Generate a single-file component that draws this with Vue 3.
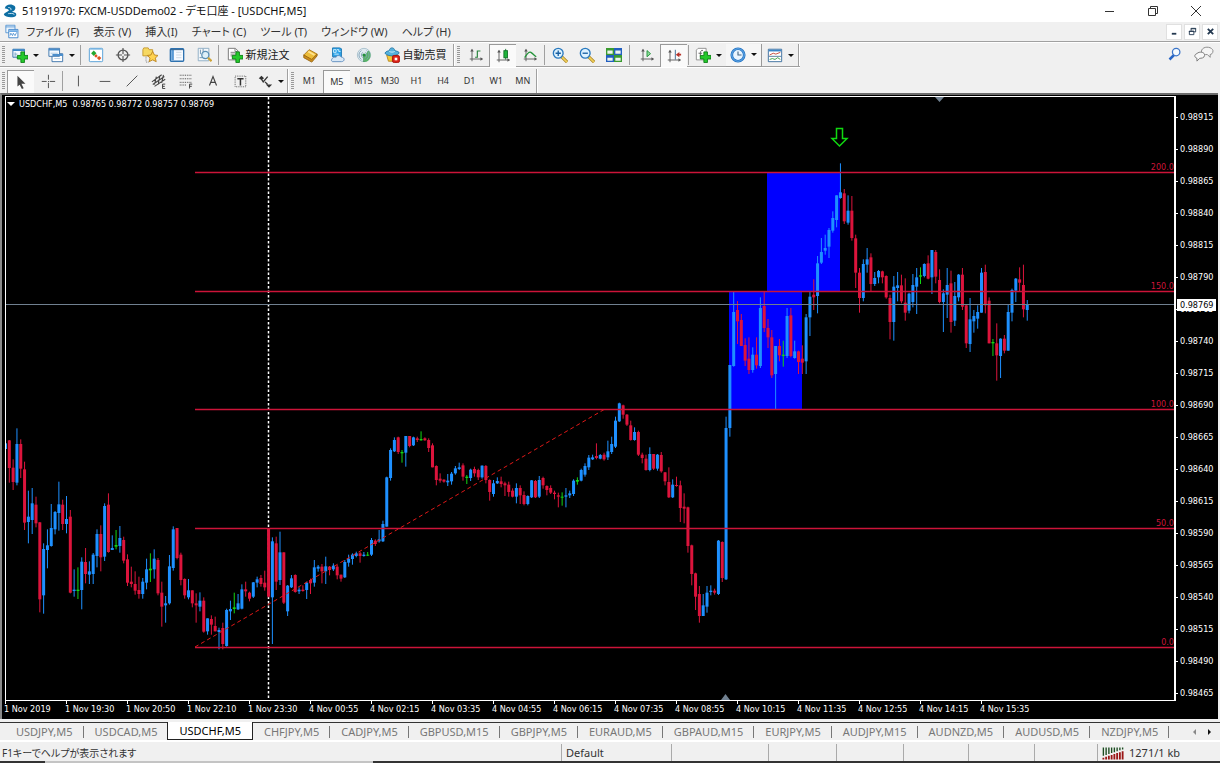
<script setup>
const arrowAxes = '<path d="M4.500 3v13M2 13.500h14" stroke="#555" fill="none"/><path d="M2.500 5l2-3 2 3zM14 11.500l3 2-3 2z" fill="#555"/>'
const plus = '<path d="M10 6.500h4v4h4v4h-4v4h-4v-4H6v-4h4z" fill="#24c92b" stroke="#0b7d16" transform="translate(0 -1)"/>'
const icons = {
  app: '<path d="M2 5c1-4 5-5 9-4 4 1 4 5 1 7l-2 1c3 0 6 1 5 4-1 2-4 2-6 2-4 0-7-1-8-3 0-2 4-3 6-5-2-2-4-2-5-2z" fill="#0d6ea3"/><path d="M6 4c2 0 4 1 3 3M6 11c2 0 5-1 7 1" stroke="#e4f4fb" fill="none"/>',
  mdi: '<path d="M1 1.500h11v9H1z" fill="#eef6fd" stroke="#4c8fd0"/><path d="M1 3.500h11" stroke="#4c8fd0"/><path d="M4.500 6.500h11v10h-11z" fill="#fff" stroke="#2f7bc6"/><path d="M5 8.500h10" stroke="#5fa3e2" stroke-width="2"/><path d="M6 14l1-3 2 3 1-3 2 3 2-4" stroke="#4c8fd0" fill="none"/>',
  newChart: '<path d="M1 2.500h13v9H1z" fill="#f4faff" stroke="#2c6ca8"/><path d="M1 3.500h13" stroke="#3d87c7" stroke-width="2"/><path d="M3.500 6v5M3 8h3M10 7h2" stroke="#79a5c7"/>' + plus,
  profiles: '<path d="M4.500 7.500h12v9h-12z" fill="#fff" stroke="#356fa8"/><path d="M1 1.500h12v9H1z" fill="#f3f9ff" stroke="#356fa8"/><path d="M1 3h12M5 9h12" stroke="#4a8dcb" stroke-width="2"/><path d="M3 7h8M7 13h7" stroke="#a8c6de"/>',
  market: '<rect x="1.500" y="1.500" width="15" height="15" rx="1" fill="#fff" stroke="#4c9bd5"/><path d="M2 2.500h14" stroke="#76b5e2"/><path d="M6.500 4l3 3-3 3-3-3z" fill="#24a82e"/><path d="M9 8l2 2-2 2-2-2zM12.500 10l2.500 2.500-2.500 2.500-2.500-2.500z" fill="#df5420"/>',
  cross: '<circle cx="9" cy="9" r="5.500" fill="none" stroke="#555" stroke-width="1.500"/><path d="M9 1v7M9 10v7M1 9h7M10 9h7" stroke="#555" stroke-width="1.300"/>',
  navigator: '<path d="M1 3l1-2h5l1 2h4v7H1z" fill="#f6d862" stroke="#c2952c"/><path d="M4.500 11v6h4" stroke="#777" stroke-dasharray="1 1" fill="none"/><path d="M12 5l2 4 4 .500-3 3 1 4-4-2-4 2 1-4-3-3 4-.500z" fill="#ffd350" stroke="#b9811b"/>',
  terminal: '<rect x="1.500" y="2" width="15" height="14" rx="1" fill="#f6faff" stroke="#2e72b0" stroke-width="1.500"/><path d="M4 3v12" stroke="#5a9ad6" stroke-width="3"/><path d="M2 3h14" stroke="#24557f"/><path d="M8 6h6M8 9h6M8 12h6" stroke="#cad5df"/>',
  tester: '<path d="M2.500 1.500h12v14h-12z" fill="#f4f8fb" stroke="#88a9c2"/><path d="M5 3v5M8 2v7M4 12h6" stroke="#668dab"/><circle cx="10.500" cy="9" r="4" fill="#d8edf9" fill-opacity=".8" stroke="#588eb4" stroke-width="1.400"/><path d="M13.500 12l4 4" stroke="#cda338" stroke-width="2.500"/>',
  order: '<path d="M1.500 1.500h8l3 3v10h-11z" fill="#fff" stroke="#6e6e6e"/><path d="M9 2v3h3M4 6h5M4 8h6M4 10h3" stroke="#777" fill="none"/>' + plus,
  editor: '<path d="M2 9l6-6 9 5-6 7z" fill="#edbd3a" stroke="#a97416"/><path d="M2 9v3l9 5 6-7V8l-6 6z" fill="#cd8d1c" stroke="#976510"/><path d="M7 5l7 4" stroke="#ffe390" stroke-width="2"/>',
  vps: '<path d="M4 1h8l2 1v9H4z" fill="#2da2e7" stroke="#1773b0"/><path d="M5 3h3v3H5zM9 3h2v2h2M6 8h5" stroke="#d8f3ff" fill="none"/><path d="M4 16.500h10c4 0 4-5 0-5-2-3-6-2-6 0-4-1-7 4-4 5z" fill="#d9e8f6" stroke="#5a8abc"/>',
  signal: '<circle cx="9" cy="9" r="7.500" fill="#dfeaf0" stroke="#a6bfcb"/><path d="M10 9v8c7-1 8-10 4-13z" fill="#57b565"/><path d="M6 4a6 6 0 0 0 0 10M12 4a6 6 0 0 1 0 10M7.500 6a4 4 0 0 0 0 6M10.500 6a4 4 0 0 1 0 6" stroke="#7f9fb5" fill="none"/><circle cx="9" cy="9" r="1.800" fill="#228b40"/><path d="M9 9v8" stroke="#298e42" stroke-width="1.500"/>',
  auto: '<path d="M3 9l2 7h8l2-7z" fill="#f5c936" stroke="#b5851e"/><path d="M1 7c2-3 3-2 5-3 0-4 6-4 6 0 3 1 5 1 5 3-4 4-12 4-16 0z" fill="#55b1dc" stroke="#2679a7"/><path d="M6 5c2 1 4 1 6 0" stroke="#d4f1ff" fill="none"/><rect x="9.500" y="9.500" width="8" height="8" rx="2" fill="#dd2116" stroke="#a50f09"/><path d="M12 12h3v3h-3z" fill="#fff"/>',
  bars: arrowAxes + '<path d="M10.500 4v8M8 11.500h2M11 4.500h3" stroke="#26823a" stroke-width="1.300"/>',
  candles: arrowAxes + '<path d="M12 1v12" stroke="#16702b"/><rect x="10" y="3" width="4" height="8" fill="#1eb53a" stroke="#11702a"/>',
  line: arrowAxes + '<path d="M3 12c3-5 5-7 7-6 2 1 3 3 6 5" fill="none" stroke="#24943a" stroke-width="1.500"/>',
  zoomIn: '<path d="M11 11l6 6" stroke="#a47c1c" stroke-width="3.500"/><path d="M11 11l6 6" stroke="#f0d05a" stroke-width="2"/><circle cx="7" cy="7" r="5.500" fill="#ddf2ff" stroke="#2979be" stroke-width="1.500"/><path d="M4 7h6M7 4v6" stroke="#1960a2" stroke-width="1.500"/>',
  zoomOut: '<path d="M11 11l6 6" stroke="#a47c1c" stroke-width="3.500"/><path d="M11 11l6 6" stroke="#f0d05a" stroke-width="2"/><circle cx="7" cy="7" r="5.500" fill="#ddf2ff" stroke="#2979be" stroke-width="1.500"/><path d="M4 7h6" stroke="#1960a2" stroke-width="1.500"/>',
  tile: '<path d="M0 1h9v8H0zM9 9h9v8H9z" fill="#3a9b2f"/><path d="M9 1h9v8H9zM0 9h9v8H0z" fill="#225fc0"/><path d="M1.500 4h6v3.500h-6zM10.500 4h6v3.500h-6zM1.500 12h6v3.500h-6zM10.500 12h6v3.500h-6z" fill="#edf5ef"/>',
  scroll: arrowAxes + '<path d="M9 4l4 3.500L9 11z" fill="#8cdc97" stroke="#1c8f36"/>',
  shift: arrowAxes + '<path d="M10.500 2v11" stroke="#34638e"/><path d="M11 7.500l4-3v2h2v2h-2v2z" fill="#b8332b"/>',
  indicator: '<path d="M1.500 3.500l2-2h9v13h-11z" fill="#fff" stroke="#888"/><path d="M9 4c-3-1-3 2-3 7M4 7h4" stroke="#555" fill="none"/>' + plus,
  clock: '<circle cx="9" cy="9" r="7" fill="#e9f5ff" stroke="#1f70c1" stroke-width="3"/><circle cx="9" cy="9" r="7" fill="none" stroke="#78b9f1"/><path d="M9 5v4h4" stroke="#496985" stroke-width="1.300" fill="none"/>',
  template: '<path d="M1.500 2.500h15v14h-15z" fill="#fff" stroke="#33689a"/><path d="M2 4h14" stroke="#3b86c7" stroke-width="2"/><path d="M2 10.500h14" stroke="#4b7698"/><path d="M3 9l4-2 3 1 5-2" stroke="#c34231" fill="none"/><path d="M3 14l3-1 3 1 3-2 3 2" stroke="#329a3b" fill="none"/>',
  cursor: '<path d="M5 2l9 9H9.500l2.500 5-2 1-2.500-5L5 14z" fill="#444"/>',
  crosshair: '<path d="M9.500 2v5.500M9.500 11v6M2 9.500h5.500M11 9.500h6" stroke="#444"/><path d="M9 9h1v1H9z" fill="#444"/>',
  vline: '<path d="M9.500 3v12" stroke="#444"/>',
  hline: '<path d="M3 9.500h12" stroke="#444"/>',
  trend: '<path d="M3 15L15 3" stroke="#444"/>',
  channel: '<path d="M1 10L12 2M2 13L15 4M4 15L16 7M6 4L4 13M10 3L8 13M14 2l-2 9" stroke="#444" stroke-width="1.200"/><path d="M16 12.500h-3v5h3M13 15h2.500" stroke="#333" fill="none"/>',
  fibo: '<path d="M2 2.500h14M2 6.500h14M2 10.500h14M2 13.500h8" stroke="#333" stroke-dasharray="1 1"/><path d="M16 12.500h-3v5M13 15h2.500" stroke="#333" fill="none"/>',
  letter: '<path d="M5 14L9 4l4 10M6.500 10.500h5" stroke="#444" stroke-width="1.300" fill="none"/>',
  label: '<rect x="3.500" y="3.500" width="12" height="12" fill="none" stroke="#555" stroke-dasharray="1 1"/><path d="M6 6.500h7M9.500 6v8" stroke="#333" stroke-width="1.700"/>',
  arrows: '<path d="M2 6l3-3 3 3-3 2zM10 13h7l-3.500 3.500z" fill="#333"/><path d="M5 7l2 3 5-6M9 10l3 3" stroke="#333" fill="none" stroke-width="1.500"/>',
  find: '<path d="M3 15l6-6" stroke="#2866c6" stroke-width="3"/><circle cx="11" cy="6" r="4.500" fill="#f5fbff" stroke="#3a74c8" stroke-width="1.500"/>',
  chat: '<path d="M9 3c3-3 10-2 11 2 0 3-2 4-3 4v3l-3-3c-5 1-8-3-5-6z" fill="#f5f5f5" stroke="#888"/><path d="M3 8c3-3 9-1 8 2 0 3-4 3-5 3l-3 3v-3C0 12 0 9 3 8z" fill="#f7f7f7" stroke="#777"/>',
}

const menus = ['ファイル (F)', '表示 (V)', '挿入(I)', 'チャート (C)', 'ツール (T)', 'ウィンドウ (W)', 'ヘルプ (H)']

const mainTools = [
  { kind: 'grip' },
  { icon: 'newChart', label: '新規チャート', drop: true },
  { icon: 'profiles', label: '表示プロファイル', drop: true },
  { kind: 'sep' },
  { icon: 'market', label: '気配値' },
  { icon: 'cross', label: 'データウィンドウ' },
  { icon: 'navigator', label: 'ナビゲーター' },
  { icon: 'terminal', label: 'ターミナル' },
  { icon: 'tester', label: 'ストラテジーテスター' },
  { kind: 'sep' },
  { icon: 'order', label: '新規注文', text: '新規注文' },
  { icon: 'editor', label: 'メタエディター' },
  { icon: 'vps', label: '仮想ホスティング' },
  { icon: 'signal', label: 'シグナル' },
  { icon: 'auto', label: '自動売買', text: '自動売買' },
  { kind: 'end' },
  { kind: 'grip' },
  { icon: 'bars', label: 'バーチャート' },
  { icon: 'candles', label: 'ローソク足', on: true },
  { icon: 'line', label: 'ラインチャート' },
  { kind: 'sep' },
  { icon: 'zoomIn', label: '拡大' },
  { icon: 'zoomOut', label: '縮小' },
  { icon: 'tile', label: '整列' },
  { kind: 'sep wide' },
  { icon: 'scroll', label: '自動スクロール' },
  { icon: 'shift', label: 'チャートシフト', on: true },
  { kind: 'sep' },
  { icon: 'indicator', label: 'インディケータ', drop: true },
  { icon: 'clock', label: '時間足設定', drop: true, raised: true },
  { icon: 'template', label: '定型チャート', drop: true },
  { kind: 'end' },
]
const drawTools = [
  { kind: 'grip' },
  { icon: 'cursor', label: 'カーソル', on: true },
  { icon: 'crosshair', label: 'クロスヘア' },
  { kind: 'sep' },
  { icon: 'vline', label: '垂直線' },
  { icon: 'hline', label: '水平線' },
  { icon: 'trend', label: 'トレンドライン' },
  { icon: 'channel', label: '平行チャネル' },
  { icon: 'fibo', label: 'フィボナッチ' },
  { icon: 'letter', label: 'テキスト' },
  { icon: 'label', label: 'テキストラベル' },
  { icon: 'arrows', label: '矢印', drop: true },
  { kind: 'end' },
  { kind: 'grip' },
]
const periods = ['M1', 'M5', 'M15', 'M30', 'H1', 'H4', 'D1', 'W1', 'MN']

// Candle rows: direction, then high, low, body top and body bottom in thirds of a chart unit below the block's top.
const blocks = [
  { top: 400, rows: 'b 65 190 130 147,r 120 248 121 204,r 178 270 203 246,b 85 256 132 248,r 118 234 132 206,r 185 390 208 368,b 272 430 350 366,b 264 402 310 360,r 290 382 314 370,r 366 637 367 598,b 430 641 447 586,b 388 505 436 450,b 312 440 384 438,b 333 403 336 388,b 245 392 313 339,r 299 390 314 372,b 288 400 357 372,r 330 580 350 578,b 508 590 569 573,g 502 597 569 573,b 472 628 485 570,r 444 550 486 522,b 484 552 514 524,b 459 552 464 522,b 388 502 402 468,r 376 514 402 472,b 310 483 318 470,r 280 458 314 456,b 406 450 444 450,g 390 448 435 440,b 378 458 414 438,r 410 490 420 482,r 463 558 478 548,r 500 562 545 552,r 514 584 552 572,r 530 596 570 582,b 534 596 545 582,b 476 568 508 548,g 460 546 506 511,b 448 536 476 508,r 474 586 480 580,r 545 680 578 620,b 588 668 610 616,b 465 614 499 610,b 379 512 388 504,r 384 478 384 474,r 458 556 464 540,r 535 596 537 586,b 537 598 571 592,r 571 622 571 610,r 580 668 610 616,b 577 634 602 620,r 592 698 602 695,b 655 704 655 694,r 646 704 657 674,r 650 694 678 694,b 683 748 690 696,r 668 748 684 732,b 626 740 630 738,b 602 660 627 634,g 578 640 622 627,b 582 630 610 628,b 553 628 568 626,r 545 590 568 574,r 575 604 578 596,b 546 594 547 590,b 530 562 538 548,r 525 560 534 552,r 512 572 548 562,r 386 592 386 590,b 412 732 424 592,r 410 570 430 545,b 395 555 457 540,r 457 612 457 608,b 555 648 557 634,b 525 564 535 562,r 523 578 525 576,b 562 582 569 574,r 556 575 569 573,b 545 597 548 570,r 536 582 540 550,b 480 560 502 548,b 495 515 500 506,r 492 550 500 514,b 470 552 499 514,r 498 526 500 510,b 490 513 497 508,r 495 538 500 526,r 524 545 524 536,b 480 534 486 532,b 464 500 476 488,b 460 494 464 477,b 455 472 460 468,r 456 488 460 468,b 456 470 464 468,g 456 468 464 467,b 414 468 420 464,r 418 438 422 432,b 390 428 418 424,b 362 426 372 424,b 230 380 232 380,b 145 242 150 234,b 112 156 120 154,r 110 162 112 156,g 150 188 156 160,b 108 200 108 158,r 108 142 108 138,b 110 138 112 136,r 110 126 115 120,g 94 122 117 121,r 112 122 115 121,r 115 156 120 144,r 130 202 136 202,r 196 256 198 240,r 220 248 236 242,r 238 248 239 245,b 222 258 242 247,b 216 254 221 244,b 198 224 205 220,b 188 210 202 207,r 190 242 196 230,g 225 252 230 234,b 206 243 209 234,r 200 230 207 220,r 206 240 210 232,b 196 236 197 232,r 195 250 198 240,r 238 302 240 276,b 240 290 250 282,b 232 252 243 250,r 230 262 244 252,r 245 288 250 256,r 245 290 254 276,r 265 292 272 290,b 250 310 264 290,r 256 312 264 286,r 274 316 285 312,b 286 316 288 312,b 240 294 241 292,r 240 294 243 292,b 228 294 240 290' },
  { top: 380, rows: 'r 290 326 294 316,r 316 346 318 330,r 316 342 324 338,r 332 358 338 342,r 338 382 346 350,g 337 377 350 353,b 324 382 346 350,b 332 354 340 346,b 298 348 302 342,g 292 314 300 305,b 266 304 270 302,b 250 290 258 284,b 225 270 233 262,b 224 240 232 238,r 190 238 228 234,b 222 238 225 236,r 218 242 224 238,b 182 240 214 232,b 170 222 192 216,b 110 204 122 200,b 68 126 70 124,r 74 116 76 104,r 102 138 104 134,r 122 182 136 180,b 142 182 156 180,r 152 228 156 224,r 218 250 224 234,r 224 272 236 270,b 202 274 222 270,r 222 270 222 266,b 222 272 224 266,r 216 278 225 274,r 276 316 277 304,r 262 354 306 352,b 298 354 314 352,r 290 320 315 318,r 302 426 316 384,r 340 430 380 386,r 380 518 382 498,r 494 616 496 582,r 578 690 580 650,r 618 728 642 708,b 642 708 676 708,b 618 698 638 680,b 616 646 632 636,r 626 644 632 638,b 480 645 482 642,r 484 606 486 594,b 110 600 144 598' },
  { top: 120, rows: 'b 735 950 735 924,b 514 740 576 738,r 543 672 570 604,r 582 678 600 678,r 655 738 675 722,r 652 762 716 750,b 682 758 704 750,r 652 746 704 736,b 532 744 564 738,r 514 636 558 624,r 597 684 624 652,r 630 774 652 766,b 678 868 678 762,r 657 724 678 706,g 662 740 704 708,b 564 714 588 708,r 564 712 586 708,b 662 716 694 714,r 692 762 694 726,r 676 762 716 728,b 582 762 592 724,b 514 648 530 592,r 478 570 524 532,b 408 580 430 528,b 354 432 396 428,b 344 404 384 392,b 324 414 330 380,b 274 338 294 332,b 226 322 226 300,b 130 236 217 234,r 207 312 220 304,b 226 314 272 308,r 228 362 272 354,r 344 504 355 458,r 444 578 458 534,b 418 544 432 534,b 384 458 418 434,r 400 514 412 492,b 456 498 474 492,b 450 490 453 472,r 452 490 454 472,r 466 536 468 532,r 524 658 534 606,b 468 662 500 606,b 456 544 496 504,r 464 550 496 544,r 475 602 548 578,b 518 580 521 572,b 462 562 495 546,b 444 582 472 500,g 442 492 466 470,b 430 472 432 468,r 406 478 430 476,b 390 522 390 472,r 390 490 396 470,r 448 550 480 546,b 508 636 520 546,b 444 594 495 524,r 452 638 490 606,b 486 618 528 602,b 462 544 464 532,r 444 570 464 560,r 554 684 556 670,b 534 696 598 672,b 570 638 588 604,b 556 626 576 596,b 444 578 458 578,r 434 580 456 556,r 532 670 542 670,g 657 708 666 670,r 610 782 670 706,b 655 774 656 708,r 645 700 656 692,b 555 692 576 692,b 506 604 510 578,b 474 546 476 512,r 442 514 478 488,r 434 592 495 568,b 540 602 554 570' },
]
const tone = { b: '#1e90ff', r: '#dc143c', g: '#12d512' }
const step = 61 / 16
const candles = blocks
  .flatMap((block) => block.rows.split(',').map((row) => {
    const [dir, ...values] = row.split(' ')
    const [high, low, top, bottom] = values.map((v) => block.top + v / 3)
    return { fill: tone[dir], high, low, top, bottom }
  }))
  .map((c, i) => ({ ...c, x: 5.5 + step * i }))

const levels = [
  { y: 172, name: '200.0' },
  { y: 291, name: '150.0' },
  { y: 409, name: '100.0' },
  { y: 528, name: '50.0' },
  { y: 647, name: '0.0' },
]
const share = (y) => ({ top: ((y - 97) / 603) * 100 + '%' })

const prices = Array.from({ length: 19 }, (_, i) => (0.98915 - i * 0.00025).toFixed(5))
const times = ['1 Nov 2019', '1 Nov 19:30', '1 Nov 20:50', '1 Nov 22:10', '1 Nov 23:30', '4 Nov 00:55', '4 Nov 02:15', '4 Nov 03:35', '4 Nov 04:55', '4 Nov 06:15', '4 Nov 07:35', '4 Nov 08:55', '4 Nov 10:15', '4 Nov 11:35', '4 Nov 12:55', '4 Nov 14:15', '4 Nov 15:35']
const tabs = ['USDJPY,M5', 'USDCAD,M5', 'USDCHF,M5', 'CHFJPY,M5', 'CADJPY,M5', 'GBPUSD,M15', 'GBPJPY,M5', 'EURAUD,M5', 'GBPAUD,M15', 'EURJPY,M5', 'AUDJPY,M15', 'AUDNZD,M5', 'AUDUSD,M5', 'NZDJPY,M5']
</script>

<template>
  <div class="window">
    <header class="title-bar">
      <svg class="logo" viewBox="0 0 16 16" v-html="icons.app"></svg>
      <h1>51191970: FXCM-USDDemo02 - デモ口座 - [USDCHF,M5]</h1>
      <div class="win-buttons">
        <button aria-label="最小化"><svg viewBox="0 0 12 12"><path d="M1 6.500h9" /></svg></button>
        <button aria-label="元に戻す"><svg viewBox="0 0 12 12"><path d="M1.500 3.500h7v7h-7zM3.500 3V1.500h7v7H9" /></svg></button>
        <button aria-label="閉じる"><svg viewBox="0 0 12 12"><path d="M1 1l10 10M11 1L1 11" /></svg></button>
      </div>
    </header>

    <nav class="menu-bar">
      <svg class="mdi" viewBox="0 0 18 18" v-html="icons.mdi"></svg>
      <button v-for="m in menus" :key="m">{{ m }}</button>
      <div class="mdi-buttons">
        <button aria-label="チャートを最小化"><svg viewBox="0 0 10 10"><path d="M2 7.500h5" stroke-width="2" /></svg></button>
        <button aria-label="チャートを元に戻す"><svg viewBox="0 0 10 10"><path d="M1.500 4.500h5v4h-5zM3.500 4V1.500h5v4H7M3 2h6M1 5h6" /></svg></button>
        <button aria-label="チャートを閉じる"><svg viewBox="0 0 10 10"><path d="M2 2l6 6M8 2L2 8" stroke-width="2" /></svg></button>
      </div>
    </nav>

    <div class="toolbar">
      <div class="tools boxed">
        <template v-for="(t, i) in mainTools" :key="i">
          <span v-if="t.kind" :class="t.kind"></span>
          <button v-else class="tool" :class="{ on: t.on, drop: t.drop, raised: t.raised, worded: t.text }" :aria-label="t.label">
            <svg viewBox="0 0 18 18" v-html="icons[t.icon]"></svg>
            <span v-if="t.text">{{ t.text }}</span>
            <i v-if="t.drop" class="caret"></i>
          </button>
        </template>
      </div>
      <div class="right-tools">
        <button aria-label="検索"><svg viewBox="0 0 18 18" v-html="icons.find"></svg></button>
        <button aria-label="チャット"><svg class="chat" viewBox="0 0 22 18" v-html="icons.chat"></svg></button>
      </div>
    </div>
    <div class="toolbar second">
      <div class="tools">
        <template v-for="(t, i) in drawTools" :key="i">
          <span v-if="t.kind" :class="t.kind"></span>
          <button v-else class="tool" :class="{ on: t.on, drop: t.drop }" :aria-label="t.label">
            <svg viewBox="0 0 18 18" v-html="icons[t.icon]"></svg>
            <i v-if="t.drop" class="caret"></i>
          </button>
        </template>
        <div class="periods">
          <button v-for="p in periods" :key="p" :class="{ on: p === 'M5' }">{{ p }}</button>
        </div>
        <span class="end"></span>
      </div>
    </div>

    <main class="chart">
      <div class="plot">
        <svg class="canvas" viewBox="6 97 1168 603" preserveAspectRatio="none">
          <rect x="729" y="291" width="73" height="118" fill="#0000ff" />
          <rect x="767" y="172" width="73" height="119" fill="#0000ff" />
          <path d="M268.500 97v603" class="day" />
          <g v-for="c in candles" :key="c.x" :fill="c.fill">
            <rect :x="c.x - 0.5" :y="c.high" width="1" :height="c.low - c.high" />
            <rect :x="c.x - 1.5" :y="c.top" width="3" :height="Math.max(1, c.bottom - c.top)" />
          </g>
          <path d="M195 647L605 409" class="trend" />
          <path v-for="l in levels" :key="l.y" :d="`M195 ${l.y + 0.5}H1175`" class="level" />
          <path d="M5 304.500h1170" stroke="#708090" />
          <path d="M836.500 128.500h6v10h4.500l-7.500 7.500l-7.500-7.500h4.500z" fill="none" stroke="#10d810" stroke-width="1.500" />
          <path d="M935 97h9l-4.500 5zM721 700h9l-4.500-6z" fill="#708090" />
        </svg>
        <div class="caption"><i></i>USDCHF,M5&nbsp; 0.98765 0.98772 0.98757 0.98769</div>
        <span v-for="l in levels" :key="l.name" class="level-name" :style="share(l.y)">{{ l.name }}</span>
      </div>
      <div class="prices">
        <span v-for="p in prices" :key="p">{{ p }}</span>
        <b :style="share(304)">0.98769</b>
      </div>
      <div class="times">
        <span v-for="t in times" :key="t">{{ t }}</span>
      </div>
    </main>

    <div class="tabs">
      <button v-for="t in tabs" :key="t" :class="{ current: t === 'USDCHF,M5' }">{{ t }}</button>
      <div class="scrollers">
        <button class="prev" aria-label="前へ"></button>
        <button class="next" aria-label="次へ"></button>
      </div>
    </div>
    <footer class="status">
      <span class="hint">F1キーでヘルプが表示されます</span>
      <span>Default</span>
      <span></span><span></span><span></span><span></span><span></span><span></span>
      <span class="net">
        <svg viewBox="0 0 24 13">
          <path d="M1.500 0v9M4.500 0v8M7.500 0v7M10.500 0v6M13.500 0v5M16.500 0v4M19.500 0v3M22.500 0v2" stroke="#1c4d20" stroke-width="1.500" />
          <path d="M1.500 11v2M4.500 10v3M7.500 9v4M10.500 8v5M13.500 7v6M16.500 6v7M19.500 5v8M22.500 4v9" stroke="#9a1616" stroke-width="2" />
        </svg>
        1271/1 kb
      </span>
    </footer>
    <div class="edge"></div>
  </div>
</template>

<style>
html, body { margin: 0; background: #f0f0f0; }
</style>

<style scoped>
.window {
  display: flex;
  flex-direction: column;
  height: 100vh;
  overflow: hidden;
  background: #f0f0f0;
  color: #333;
  font: 11px/18px "Noto Sans", "Noto Sans CJK JP", sans-serif;
  font-feature-settings: "palt";
}
button {
  margin: 0;
  padding: 0;
  border: 0;
  background: none;
  color: inherit;
  font: inherit;
  font-feature-settings: inherit;
  white-space: nowrap;
}
svg { display: block; flex: none; }
.title-bar { display: flex; align-items: center; flex: none; height: 22px; background: #fff; color: #111; }
.logo { width: 14px; height: 14px; margin: 0 5px 0 3px; }
h1 { margin: 0; font-size: 11px; font-weight: 400; }
.win-buttons { display: flex; margin: 0 3px 0 auto; }
.win-buttons button { width: 43px; height: 20px; display: grid; place-items: center; }
.win-buttons svg { width: 12px; height: 12px; fill: none; stroke: #333; }
.menu-bar { display: flex; align-items: center; flex: none; gap: 14px; height: 19px; }
.mdi { width: 15px; height: 15px; margin: 0 -8px 0 5px; }
.mdi-buttons { display: flex; gap: 2px; margin: 0 2px 0 auto; }
.mdi-buttons button { display: grid; place-items: center; width: 16px; height: 16px; background: #fff; border: 1px solid #e0e0e0; box-sizing: border-box; }
.mdi-buttons svg { width: 9px; height: 9px; fill: none; stroke: #23384f; }
.toolbar { display: flex; justify-content: space-between; flex: none; height: 26px; border-top: 1px solid #a0a0a0; box-shadow: inset 0 1px #fff; box-sizing: border-box; }
.second { border-top: 0; box-shadow: none; }
.tools { display: flex; align-items: center; padding-top: 2px; }
.boxed { border-bottom: 1px solid #a0a0a0; box-shadow: 0 1px #fff; }
.grip { width: 3px; height: 18px; margin: 0 2px; background: repeating-linear-gradient(#999 0 1px, #f0f0f0 1px 2px); }
.sep { width: 1px; height: 20px; margin: 0 1px; background: #a0a0a0; }
.wide { margin: 0 3px 0 2px; }
.end { width: 1px; height: 100%; background: #a0a0a0; border-right: 1px solid #fff; }
.tool { display: flex; align-items: center; justify-content: center; gap: 3px; width: 27px; height: 23px; box-sizing: border-box; }
.tool svg { width: 16px; height: 16px; }
.drop { width: 36px; gap: 5px; }
.second .drop { width: 34px; }
.worded { width: 76px; color: #222; }
.on { background: #fafafa; border-top: 1px solid #999; border-left: 1px solid #999; }
.raised { border-right: 1px solid #999; border-bottom: 1px solid #999; background: #f6f6f6; }
.caret { width: 0; border: 3px solid transparent; border-top-color: #111; border-bottom: 0; }
.right-tools { display: flex; align-items: center; gap: 12px; padding-right: 5px; }
.right-tools svg { width: 15px; height: 15px; }
.right-tools .chat { width: 21px; height: 17px; }
.periods { display: flex; width: 240px; height: 23px; font-size: 9px; }
.periods button { flex: 1; box-sizing: border-box; }
.chart {
  flex: 1;
  min-height: 0;
  display: grid;
  grid-template: minmax(0, 1fr) 18px / minmax(0, 1fr) 42px;
  margin-right: 2px;
  padding-top: 1px;
  border-top: 2px solid #6c6c6c;
  border-left: 2px solid #8a8a8a;
  background: #000;
  color: #fff;
  font: 9px/12px "DejaVu Sans Condensed", "DejaVu Sans", sans-serif;
}
.plot { position: relative; margin-left: 3px; border: 1px solid #fff; border-right-width: 2px; }
.canvas { width: 100%; height: 100%; }
.level { stroke: #cc1439; stroke-width: 1.500; }
.trend { stroke: #e01818; stroke-dasharray: 4 3; stroke-width: 1; }
.day { stroke: #fff; stroke-dasharray: 2.500 2; stroke-width: 1.500; }
.caption { position: absolute; top: 1px; left: 1px; display: flex; align-items: center; white-space: nowrap; }
.caption i { margin-right: 4px; border: 4px solid transparent; border-top-color: #fff; border-bottom: 0; }
.level-name { position: absolute; right: 0; margin-top: -11px; color: #cc1439; }
.prices { position: relative; display: flex; flex-direction: column; justify-content: space-between; padding: 15px 0 2px; }
.prices span { position: relative; padding-left: 4px; }
.prices span::before { content: ""; position: absolute; left: 0; top: 6px; width: 2px; height: 1px; background: #fff; }
.prices b { position: absolute; left: 1px; right: 2px; margin-top: -5px; padding-left: 3px; background: #fff; color: #000; font-weight: 400; }
.times { grid-column: 1 / -1; display: grid; grid-template-columns: repeat(17, 61fr) 176fr; padding-left: 3px; }
.times span { position: relative; padding-top: 2px; margin-left: -1px; white-space: nowrap; }
.times span::before { content: ""; position: absolute; left: 1px; top: 0; width: 1px; height: 3px; background: #fff; }
.tabs { display: flex; flex: none; height: 17px; margin-top: 3px; padding-left: 5px; border-top: 1px solid #333; border-bottom: 2px solid #fff; color: #777; line-height: 16px; }
.tabs > button { position: relative; padding: 0 11px; }
.tabs > button::after { content: ""; position: absolute; right: 0; top: 3px; height: 12px; width: 1px; background: #777; }
.tabs .current { margin: -1px 0 0 -1px; border: 1px solid #222; border-top: 0; background: #fff; color: #000; }
.tabs .current::after { display: none; }
.scrollers { display: flex; align-items: center; gap: 12px; margin: 0 6px 0 auto; }
.scrollers button { border: 3px solid transparent; }
.scrollers .prev { border-right-color: #888; }
.scrollers .next { border-left-color: #111; }
.status { display: grid; grid-template-columns: 561fr 110fr 97fr 68fr 67fr 65fr 66fr 63fr 123fr; flex: none; height: 19px; }
.status span { display: flex; align-items: center; padding-left: 4px; margin-top: 2px; border-left: 1px solid #aaa; white-space: nowrap; }
.status .hint { border: 0; padding-left: 2px; font-size: 10px; }
.net svg { width: 22px; height: 13px; margin-right: 5px; }
.edge { flex: none; height: 2px; background: linear-gradient(90deg, #333 0 3.700%, #c4c4c4 3.700% 30.600%, #333 30.600%); }
</style>
